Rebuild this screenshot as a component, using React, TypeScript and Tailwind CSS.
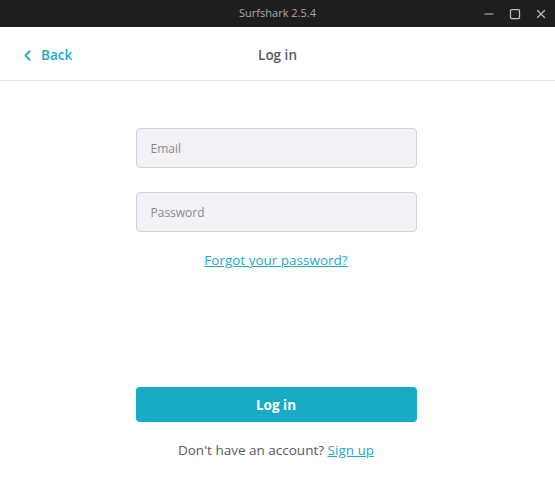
import { ChevronLeft, Minus, Square, X } from 'lucide-react';

export default function App() {
  return (
    <div className="w-[555px] h-[498px] flex flex-col bg-white font-['Open_Sans',sans-serif]">
      {/* Title bar */}
      <div className="h-[27px] bg-[#1e1e20] flex items-center relative">
        <div className="flex-1 text-center text-[11px] text-[#a8a8aa]">Surfshark 2.5.4</div>
        <div className="absolute right-0 top-0 h-[27px] flex items-center gap-[13px] pr-[7px] text-[#bdbdbf]">
          <Minus className="w-[14px] h-[14px]" strokeWidth={2} />
          <Square className="w-[12px] h-[12px]" strokeWidth={2.5} />
          <X className="w-[14px] h-[14px]" strokeWidth={2} />
        </div>
      </div>

      {/* Header */}
      <div className="h-[54px] pt-[3px] border-b border-[#e6e6e8] flex items-center relative">
        <button className="absolute left-[19px] flex items-center gap-[5px] text-[#1eaac6] text-[13.5px] font-semibold">
          <ChevronLeft className="w-[17px] h-[17px]" strokeWidth={2.5} />
          Back
        </button>
        <div className="flex-1 text-center text-[13.5px] font-semibold text-[#5a5a5e]">Log in</div>
      </div>

      {/* Form */}
      <div className="flex-1 flex flex-col items-center pt-[47px] pr-[3px]">
        <input
          placeholder="Email"
          className="w-[281px] h-[40px] rounded-[4px] bg-[#f2f1f7] border border-[#d4d3da] px-[14px] text-[12px] placeholder:text-[#8a8a90] outline-none"
        />
        <input
          placeholder="Password"
          type="password"
          className="mt-[24px] w-[281px] h-[40px] rounded-[4px] bg-[#f2f1f7] border border-[#d4d3da] px-[14px] text-[12px] placeholder:text-[#8a8a90] outline-none"
        />
        <a href="#" className="mt-[18px] text-[13.5px] text-[#1eaac6] underline">Forgot your password?</a>

        <button className="mt-[117px] w-[281px] h-[35px] rounded-[4px] bg-[#18abc7] text-white text-[13.5px] font-bold">
          Log in
        </button>
        <div className="mt-[18px] text-[13.5px] text-[#5a5a5e]">
          Don't have an account?{' '}
          <a href="#" className="text-[#1eaac6] underline">Sign up</a>
        </div>
      </div>
    </div>
  );
}
